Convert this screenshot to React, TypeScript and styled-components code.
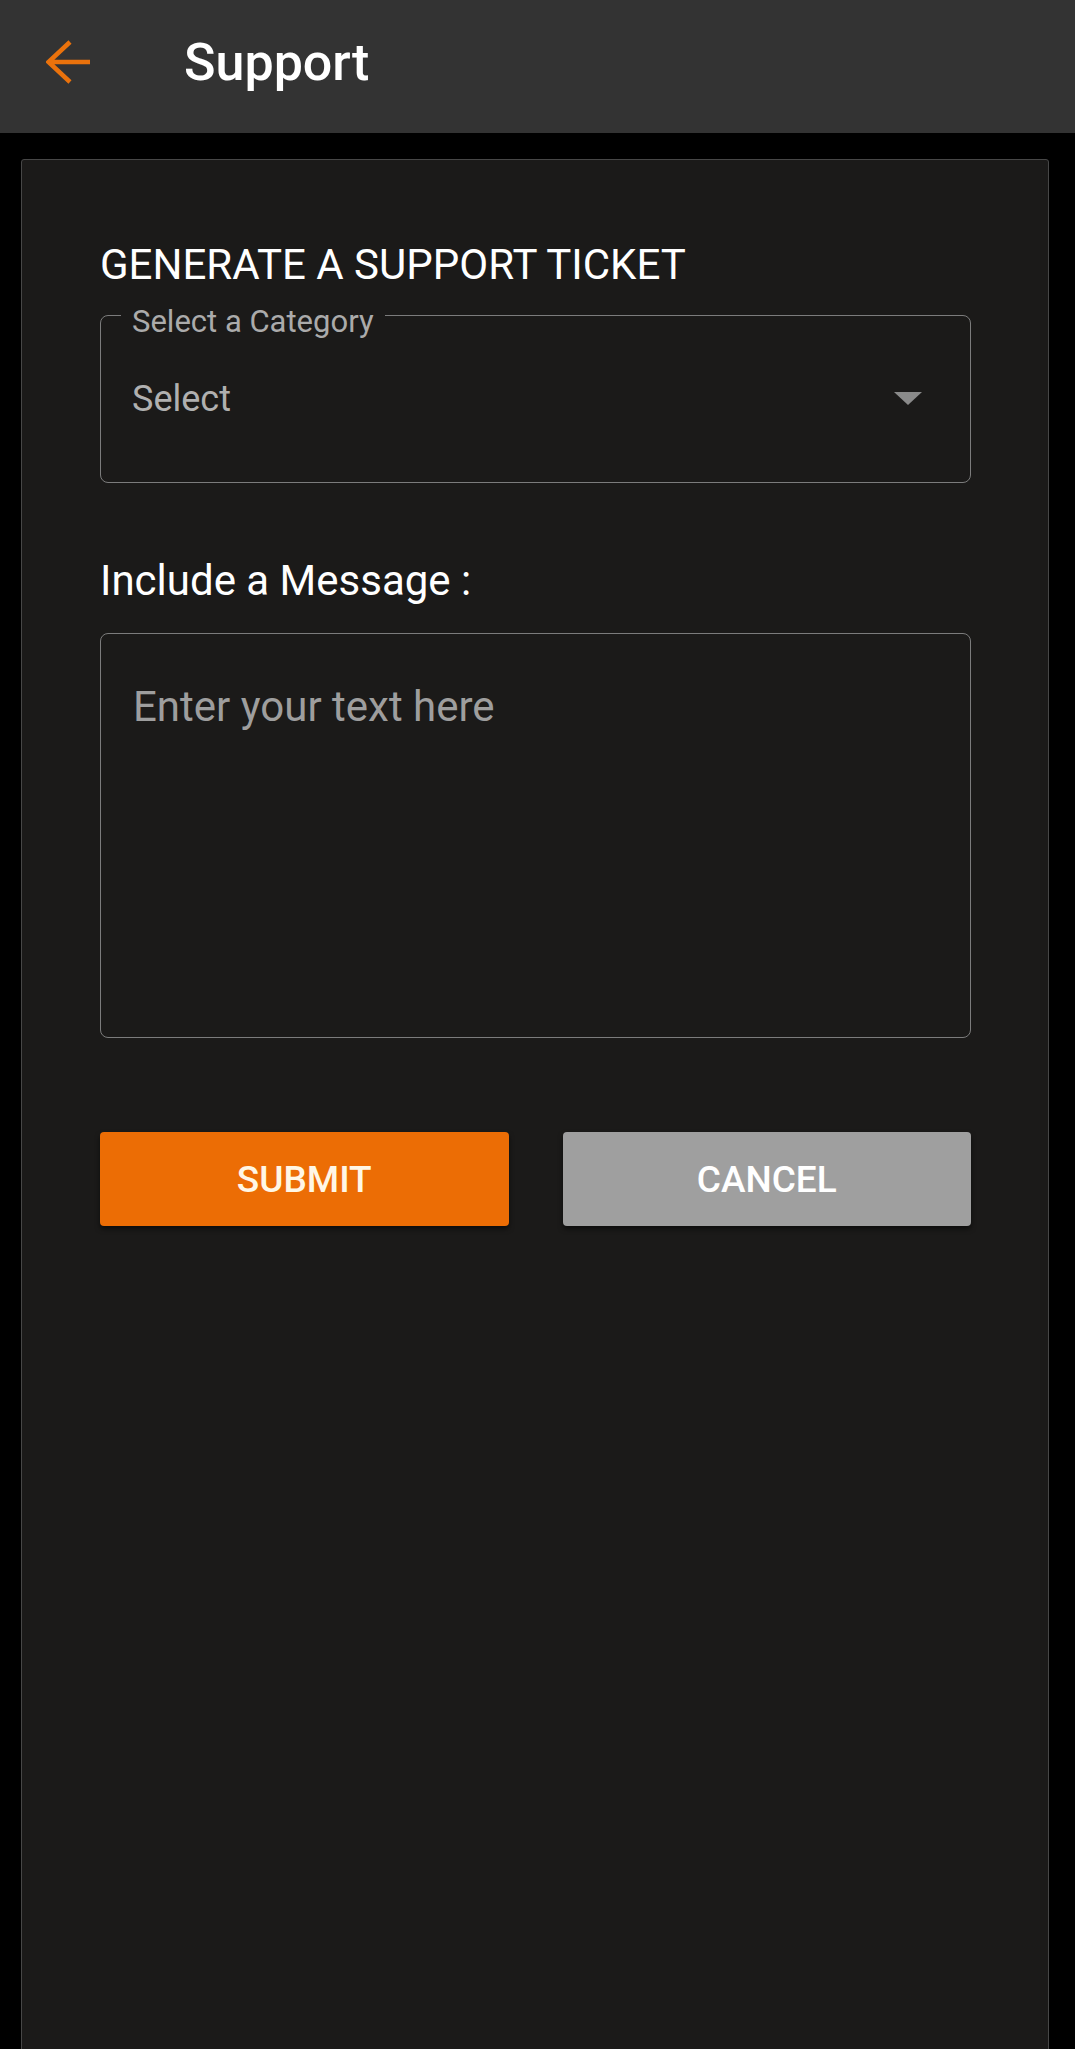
import { FC } from 'react';
import styled, { createGlobalStyle } from 'styled-components';

const GlobalStyle = createGlobalStyle`
  html, body {
    margin: 0;
    padding: 0;
    background: #000;
  }
  body {
    font-family: Roboto, "Noto Sans", "Liberation Sans", sans-serif;
    -webkit-font-smoothing: antialiased;
  }
  * {
    box-sizing: border-box;
  }
`;

const Page = styled.div`
  display: flex;
  flex-direction: column;
  min-height: 100vh;
`;

const Header = styled.header`
  display: flex;
  align-items: center;
  height: 133px;
  padding: 0 0 8px 46px;
  background: #333333;
`;

const BackButton = styled.button`
  display: flex;
  align-items: center;
  justify-content: center;
  padding: 0;
  margin-bottom: 2px;
  border: none;
  background: transparent;
  cursor: pointer;
`;

const Title = styled.h1`
  margin: 0 0 0 92px;
  font-size: 52px;
  font-weight: 500;
  line-height: 61px;
  color: #ffffff;
`;

const Card = styled.main`
  margin: 26px 26px 0 21px;
  min-height: 1900px;
  padding: 80px 77px 0 78px;
  background: #1b1a19;
  border: 1px solid #474747;
  border-radius: 3px;
`;

const Heading = styled.h2`
  margin: 0;
  font-size: 42px;
  font-weight: 400;
  line-height: 50px;
  color: #ffffff;
`;

const SelectField = styled.div`
  position: relative;
  display: flex;
  align-items: center;
  justify-content: space-between;
  height: 168px;
  margin-top: 25px;
  padding: 0 48px 0 31px;
  border: 1.5px solid #7c7c7c;
  border-radius: 8px;
`;

const FieldLabel = styled.span`
  position: absolute;
  top: -12px;
  left: 20px;
  padding: 0 11px;
  background: #1b1a19;
  font-size: 31px;
  line-height: 36px;
  color: #ababab;
`;

const SelectValue = styled.span`
  font-size: 36px;
  line-height: 42px;
  color: #b0b0b0;
`;

const Caret = styled.span`
  width: 0;
  height: 0;
  border-left: 14px solid transparent;
  border-right: 14px solid transparent;
  border-top: 13px solid #8a8a8a;
  margin-bottom: 2px;
`;

const MessageLabel = styled.label`
  display: block;
  margin-top: 73px;
  font-size: 42px;
  line-height: 50px;
  color: #ffffff;
`;

const MessageBox = styled.textarea`
  display: block;
  width: 100%;
  height: 405px;
  margin-top: 27px;
  padding: 48px 32px;
  background: transparent;
  border: 1.5px solid #7c7c7c;
  border-radius: 8px;
  font-family: inherit;
  font-size: 42px;
  line-height: 50px;
  color: #e0e0e0;
  resize: none;
  outline: none;

  &::placeholder {
    color: #9e9e9e;
  }
`;

const Actions = styled.div`
  display: grid;
  grid-template-columns: 1fr 1fr;
  gap: 54px;
  margin-top: 94px;
`;

const ActionButton = styled.button<{ $variant: 'primary' | 'secondary' }>`
  height: 94px;
  border: none;
  border-radius: 4px;
  background: ${({ $variant }) => ($variant === 'primary' ? '#ec6d05' : '#9f9f9f')};
  color: ${({ $variant }) => ($variant === 'primary' ? '#fff7e6' : '#ffffff')};
  font-family: inherit;
  font-size: 37px;
  font-weight: 500;
  box-shadow: 0 3px 5px rgba(0, 0, 0, 0.55);
  cursor: pointer;
`;

const ArrowBack: FC = () => (
  <svg width="46" height="44" viewBox="0 0 46 44" fill="none">
    <path
      d="M24 2 L2.5 22 L24 42 M2.5 22 H44"
      stroke="#ea720c"
      strokeWidth="4.5"
      strokeLinecap="butt"
      strokeLinejoin="miter"
    />
  </svg>
);

const App: FC = () => {
  return (
    <Page>
      <GlobalStyle />
      <Header>
        <BackButton aria-label="Back">
          <ArrowBack />
        </BackButton>
        <Title>Support</Title>
      </Header>
      <Card>
        <Heading>GENERATE A SUPPORT TICKET</Heading>
        <SelectField>
          <FieldLabel>Select a Category</FieldLabel>
          <SelectValue>Select</SelectValue>
          <Caret />
        </SelectField>
        <MessageLabel htmlFor="message">Include a Message :</MessageLabel>
        <MessageBox id="message" placeholder="Enter your text here" />
        <Actions>
          <ActionButton $variant="primary">SUBMIT</ActionButton>
          <ActionButton $variant="secondary">CANCEL</ActionButton>
        </Actions>
      </Card>
    </Page>
  );
};

export default App;
